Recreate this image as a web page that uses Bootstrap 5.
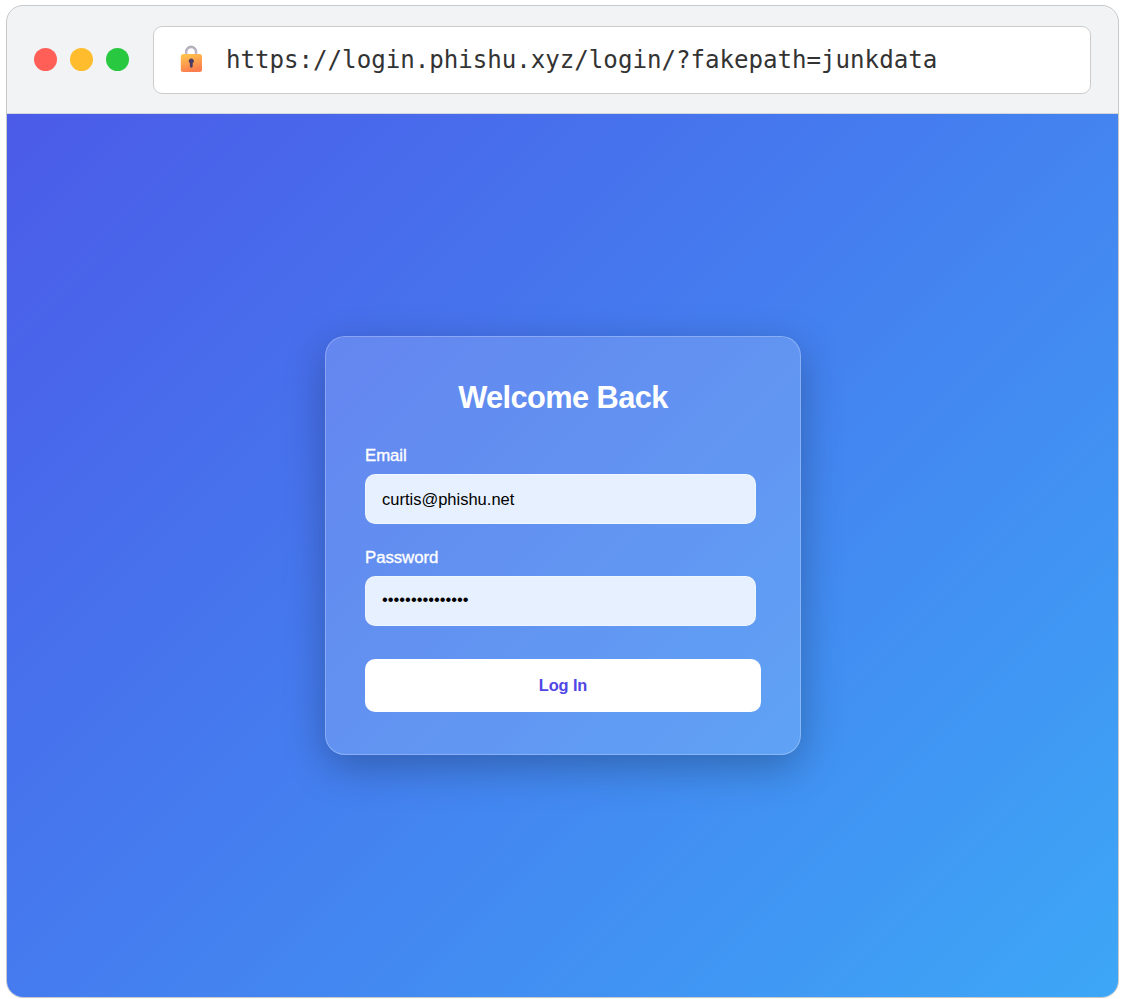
<!DOCTYPE html>
<html lang="en">
<head>
<meta charset="utf-8">
<meta name="viewport" content="width=device-width, initial-scale=1">
<title>Welcome Back</title>
<link href="https://cdn.jsdelivr.net/npm/bootstrap@5.3.0/dist/css/bootstrap.min.css" rel="stylesheet">
<style>
  body { background: #fff; font-family: "Liberation Sans", Arial, sans-serif; height: 999px; padding: 5px 6px 1px; }
  .browser { border: 1px solid #c8c9cb; border-radius: 17px; background: #f1f3f5; }
  .toolbar { height: 108px; padding: 0 27px; border-bottom: 1px solid #d3d6da; }
  .dots { gap: 13px; }
  .dot { width: 23px; height: 23px; }
  .dot-red { background: #ff5f57; }
  .dot-amber { background: #ffbd2e; }
  .dot-green { background: #28c840; }
  .address { height: 68px; margin-left: 24px; padding: 0 26px; border: 1px solid #ccc; border-radius: 9px; }
  .lock { margin-bottom: 2px; }
  .url { font: 24.15px/1 "DejaVu Sans Mono", monospace; color: #333; margin-left: 22px; padding-top: 2px; letter-spacing: -.02px; }
  .viewport { background: linear-gradient(135deg, #4b5be8 0%, #457bef 44%, #3da7f6 100%); padding-top: 222px; }
  .login-panel { width: 476px; height: 419px; padding: 41px 38.5px 0 39.5px; border: 1px solid rgba(255,255,255,.25); border-radius: 20px; background: rgba(255,255,255,.16); box-shadow: 0 12px 40px rgba(0,0,0,.27); }
  .title { font-size: 30.8px; line-height: 40px; margin-bottom: 28px; letter-spacing: -.6px; }
  .field-label { font-size: 16.8px; line-height: 20px; margin-bottom: 8px; -webkit-text-stroke: .35px #fff; letter-spacing: -.05px; }
  .field-label-next { margin-top: 24px; }
  .field, .field:focus { width: 391px; height: 50px; padding: 1px 16px 0; border: 1px solid rgba(255,255,255,.4); border-radius: 10px; background: #e7f0fe; background-clip: border-box; color: #000; font-size: 16.5px; }
  #password { padding: 0 16px 3px; }
  .login-btn, .login-btn:hover { height: 53px; margin-top: 33px; padding-bottom: 7px; border: 1px solid rgba(255,255,255,.4); border-radius: 10px; background: #fff; color: #4f46e5; font-size: 16.4px; letter-spacing: -.1px; }
</style>
</head>
<body>
<div class="browser h-100 overflow-hidden d-flex flex-column">
  <header class="toolbar d-flex align-items-center flex-shrink-0">
    <div class="dots d-flex">
      <span class="dot dot-red rounded-circle"></span>
      <span class="dot dot-amber rounded-circle"></span>
      <span class="dot dot-green rounded-circle"></span>
    </div>
    <div class="address bg-white flex-grow-1 d-flex align-items-center">
      <svg class="lock" width="24" height="28" viewBox="0 0 24 28" aria-hidden="true">
        <defs>
          <linearGradient id="body" x1="0" y1="0" x2=".3" y2="1"><stop stop-color="#ffc94d"/><stop offset="1" stop-color="#fb7f4e"/></linearGradient>
          <linearGradient id="shackle" x1="0" y1="0" x2="0" y2="1"><stop stop-color="#b3b0b8"/><stop offset="1" stop-color="#c9b9d6"/></linearGradient>
        </defs>
        <path d="M6.2 11V6.8a4.9 4.9 0 0 1 9.8 0V11" fill="none" stroke="url(#shackle)" stroke-width="2.6"/>
        <rect x=".8" y="9" width="21.2" height="18" rx="2.5" fill="url(#body)"/>
        <path d="M11.3 13.5a2.6 2.6 0 0 1 1.4 4.8v3a1.4 1.4 0 0 1-2.8 0v-3a2.6 2.6 0 0 1 1.4-4.8z" fill="#4b3b62"/>
      </svg>
      <span class="url text-nowrap">https://login.phishu.xyz/login/?fakepath=junkdata</span>
    </div>
  </header>
  <main class="viewport flex-grow-1">
    <form class="login-panel mx-auto text-white">
      <h1 class="title fw-bold text-center">Welcome Back</h1>
      <label class="field-label d-block" for="email">Email</label>
      <input class="field form-control shadow-none" id="email" type="email" value="curtis@phishu.net">
      <label class="field-label field-label-next d-block" for="password">Password</label>
      <input class="field form-control shadow-none" id="password" type="password" value="correcthorse123">
      <button class="login-btn btn w-100 fw-bold" type="button">Log In</button>
    </form>
  </main>
</div>
<script src="https://cdn.jsdelivr.net/npm/bootstrap@5.3.0/dist/js/bootstrap.bundle.min.js"></script>
</body>
</html>
